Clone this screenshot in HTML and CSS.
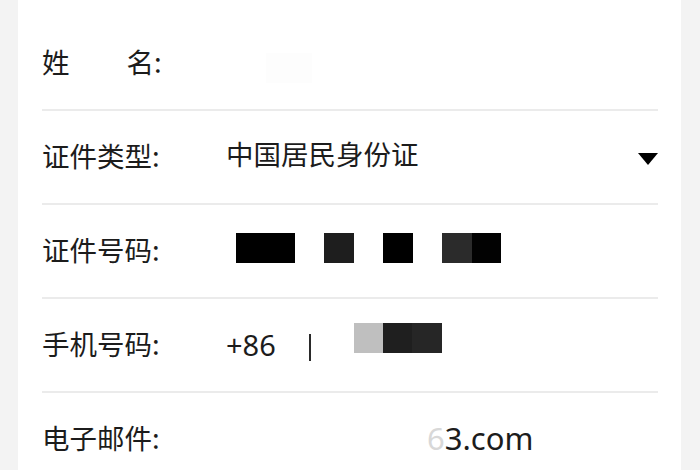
FILE: index.html
```html
<!DOCTYPE html>
<html lang="zh-CN">
<head>
<meta charset="utf-8">
<link rel="stylesheet" href="styles.css">
</head>
<body>
<div class="card">
  <div class="row">
    <div class="label">姓<span class="gap"></span>名:</div>
    <div class="value"><span class="ghost"></span></div>
  </div>
  <div class="row">
    <div class="label">证件类型:</div>
    <div class="value select">
      <span>中国居民身份证</span>
      <svg class="caret" width="20" height="13" viewBox="0 0 20 13"><path d="M0 0H20L10 12Z" fill="#000"/></svg>
    </div>
  </div>
  <div class="row">
    <div class="label">证件号码:</div>
    <div class="value masks">
      <span class="blk b1"></span>
      <span class="blk b2"></span>
      <span class="blk b3"></span>
      <span class="blk b4"><i class="half h1"></i><i class="half h2"></i></span>
    </div>
  </div>
  <div class="row">
    <div class="label">手机号码:</div>
    <div class="value phone">
      <span class="cc">+86</span>
      <span class="bar"></span>
      <span class="pblk"><i class="pp g"></i><i class="pp d1"></i><i class="pp d2"></i></span>
    </div>
  </div>
  <div class="row">
    <div class="label">电子邮件:</div>
    <div class="value email"><span class="fade">6</span>3.com</div>
  </div>
</div>
</body>
</html>
```
FILE: styles.css
```css
html, body {
  margin: 0;
  padding: 0;
  background: #f3f3f3;
  height: 470px;
  overflow: hidden;
}
.card {
  margin: 0 19px 0 18px;
  background: #ffffff;
  padding: 17px 23px 0 24px;
  height: 470px;
  box-sizing: border-box;
  font-family: "Noto Sans", "Noto Sans CJK SC", sans-serif;
  color: #1c1c1c;
}
.row {
  height: 92px;
  border-bottom: 2px solid #ebebeb;
  display: flex;
  align-items: center;
}
.label {
  width: 184px;
  flex: none;
  font-size: 27.5px;
  display: flex;
  align-items: center;
  margin-top: -5px;
  font-family: "Noto Sans CJK SC", sans-serif;
}
.gap {
  display: inline-block;
  width: 57px;
}
.value {
  flex: 1;
  display: flex;
  align-items: center;
  font-size: 27.5px;
  font-family: "Noto Sans CJK SC", sans-serif;
}
.ghost {
  display: block;
  width: 46px;
  height: 30px;
  background: #fdfdfd;
  margin-left: 40px;
  margin-top: 10px;
}
.select {
  justify-content: space-between;
  margin-top: -6px;
}
.select span {
  margin-top: -2px;
}
.caret {
  display: block;
  margin-top: 10px;
}
.masks {
  padding-left: 10px;
  margin-top: -6px;
}
.blk {
  display: block;
  height: 30px;
  margin-right: 29px;
}
.b1 { width: 59px; background: #000; }
.b2 { width: 30px; background: #1e1e1e; }
.b3 { width: 30px; background: #000; }
.b4 { width: 59px; display: flex; }
.half { display: block; width: 50%; height: 100%; }
.h1 { background: #2b2b2b; }
.h2 { background: #020202; }
.phone {
  font-family: "Noto Sans", sans-serif;
}
.cc {
  font-size: 29px;
  margin-top: -2px;
}
.bar {
  display: block;
  width: 2px;
  height: 27px;
  background: #2a2a2a;
  margin-left: 33px;
  margin-top: 4px;
}
.pblk {
  display: flex;
  margin-left: 43px;
  margin-top: -14px;
  height: 30px;
}
.pp { display: block; height: 100%; }
.g { width: 29px; background: #bfbfbf; }
.d1 { width: 29px; background: #1f1f1f; }
.d2 { width: 30px; background: #262626; }
.email {
  font-family: "Noto Sans", sans-serif;
  font-size: 31px;
  padding-left: 201px;
  margin-top: -3px;
}
.fade {
  color: #d8d8d8;
}
```
